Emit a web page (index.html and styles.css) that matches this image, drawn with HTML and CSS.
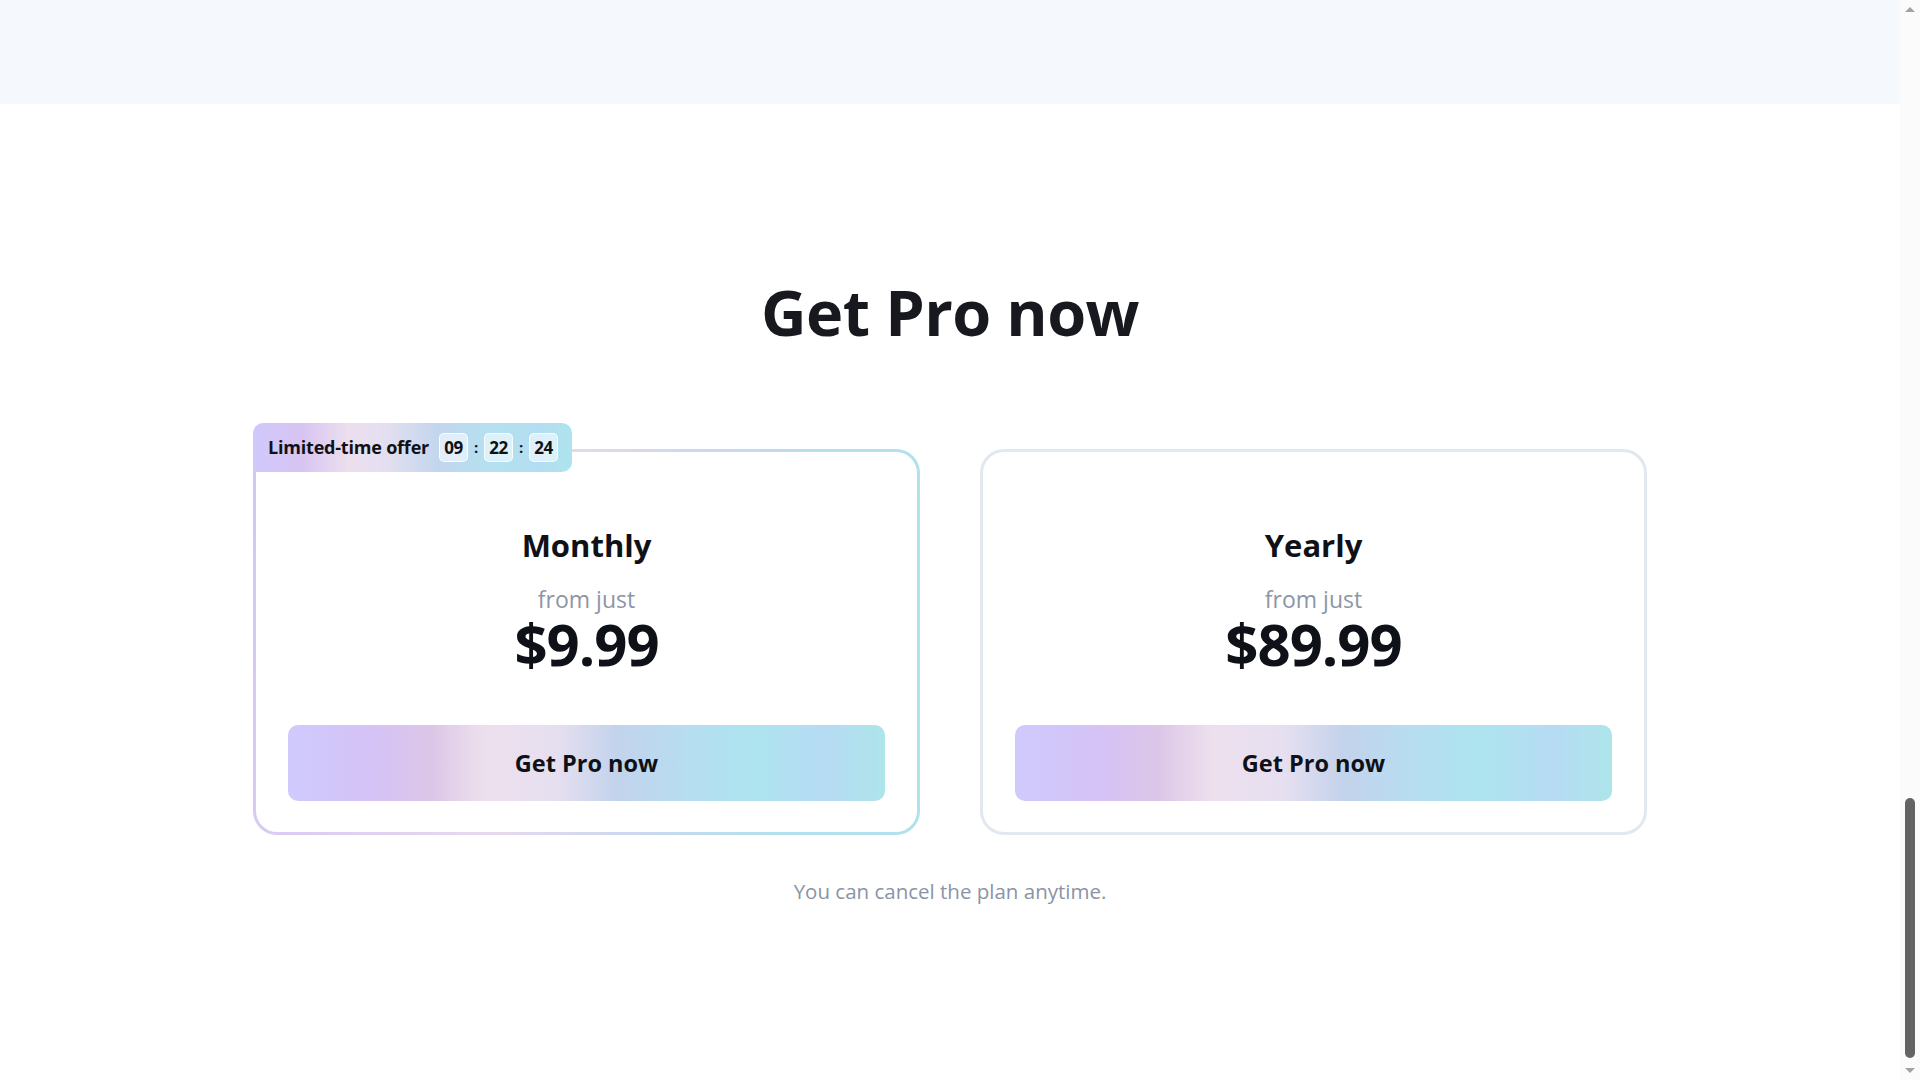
FILE: index.html
```html
<!DOCTYPE html>
<html lang="en">
<head>
<meta charset="utf-8">
<title>Get Pro now</title>
<link rel="stylesheet" href="styles.css">
</head>
<body>
<div class="window">
  <main class="page">
    <section class="hero-tail"></section>
    <section class="pricing">
      <h1 class="pricing-title">Get Pro now</h1>
      <div class="plans">
        <article class="plan plan--featured">
          <div class="offer-badge">
            <span class="offer-label">Limited-time offer</span>
            <span class="timer">
              <span class="timer-box">09</span>
              <span class="timer-sep">:</span>
              <span class="timer-box">22</span>
              <span class="timer-sep">:</span>
              <span class="timer-box">24</span>
            </span>
          </div>
          <h2 class="plan-name">Monthly</h2>
          <p class="plan-from">from just</p>
          <p class="plan-price">$9.99</p>
          <button class="plan-cta" type="button">Get Pro now</button>
        </article>
        <article class="plan">
          <h2 class="plan-name">Yearly</h2>
          <p class="plan-from">from just</p>
          <p class="plan-price">$89.99</p>
          <button class="plan-cta" type="button">Get Pro now</button>
        </article>
      </div>
      <p class="pricing-note">You can cancel the plan anytime.</p>
    </section>
  </main>
  <div class="scrollbar" aria-hidden="true">
    <span class="scroll-arrow scroll-arrow--up"></span>
    <div class="scroll-track"><span class="scroll-thumb"></span></div>
    <span class="scroll-arrow scroll-arrow--down"></span>
  </div>
</div>
</body>
</html>
```
FILE: styles.css
```css
html, body {
  margin: 0;
  height: 100%;
}

body {
  font-family: "Open Sans", "Noto Sans", sans-serif;
  color: #13151b;
  background: #ffffff;
  overflow: hidden;
}

.window {
  display: flex;
  height: 100vh;
  overflow: hidden;
}

.page {
  flex: 1;
  min-width: 0;
}

.hero-tail {
  height: 104px;
  background: #f5f8fc;
}

.pricing {
  box-sizing: border-box;
  padding-top: 170px;
  display: flex;
  flex-direction: column;
  align-items: center;
}

.pricing-title {
  margin: 0;
  font-size: 63px;
  line-height: 1.2;
  font-weight: 700;
  letter-spacing: -0.6px;
  color: #18191f;
}

.plans {
  margin-top: 99px;
  display: grid;
  grid-template-columns: 667px 667px;
  gap: 60px;
}

.plan {
  position: relative;
  box-sizing: border-box;
  border: 3px solid #e1e8ef;
  border-radius: 24px;
  padding: 75px 32px 31px;
  display: flex;
  flex-direction: column;
  align-items: center;
  text-align: center;
  background: #ffffff;
}

.plan--featured {
  border-color: transparent;
  background:
    linear-gradient(#ffffff, #ffffff) padding-box,
    linear-gradient(100deg, #d4c6f5 0%, #e6d9ee 42%, #cad8ee 62%, #b4e0ec 80%, #b0e2ec 100%) border-box;
}

.offer-badge {
  position: absolute;
  top: -29px;
  left: -3px;
  height: 49px;
  box-sizing: border-box;
  padding: 0 14px 0 15px;
  display: flex;
  align-items: center;
  gap: 10px;
  border-radius: 10px 10px 10px 0;
  background: linear-gradient(90deg, #d0c9fb 0%, #d7c4f2 15%, #ecdfee 30%, #e3dff0 42%, #c2d6ee 58%, #b3e1f0 75%, #b3def2 90%, #ade4ec 100%);
  font-size: 18px;
  font-weight: 700;
  color: #0f1117;
}

.offer-label {
  white-space: nowrap;
  letter-spacing: -0.2px;
}

.timer {
  display: flex;
  align-items: center;
  gap: 5px;
}

.timer-box {
  width: 29px;
  height: 29px;
  box-sizing: border-box;
  display: flex;
  align-items: center;
  justify-content: center;
  background: rgba(255, 255, 255, 0.55);
  border: 1px solid rgba(255, 255, 255, 0.85);
  border-radius: 5px;
  font-size: 17px;
  font-weight: 700;
  letter-spacing: -0.3px;
}

.timer-sep {
  font-size: 15px;
  font-weight: 700;
  width: 6px;
  text-align: center;
}

.plan-name {
  margin: 0;
  font-size: 31px;
  line-height: 36px;
  font-weight: 700;
  color: #0f1117;
}

.plan-from {
  margin: 23px 0 0;
  font-size: 23px;
  line-height: 26px;
  font-weight: 400;
  color: #8d96a6;
}

.plan-price {
  margin: 3px 0 0;
  font-size: 58px;
  line-height: 58px;
  font-weight: 700;
  letter-spacing: -1px;
  color: #0e1118;
}

.plan-cta {
  margin-top: 52px;
  width: 100%;
  height: 76px;
  border: 0;
  border-radius: 10px;
  background: linear-gradient(90deg, #cfcafd 0%, #d5c2f6 14%, #dcc6e8 24%, #ede0ed 33%, #e6dff0 45%, #c3d3ec 55%, #b5def1 68%, #ade4ef 78%, #b6dbf3 90%, #ade5ea 100%);
  font-family: inherit;
  font-size: 23.5px;
  font-weight: 700;
  color: #0f1117;
  cursor: pointer;
}

.pricing-note {
  margin: 42px 0 0;
  font-size: 20.5px;
  line-height: 28px;
  color: #8a94a6;
}

.scrollbar {
  flex: none;
  width: 20px;
  background: #fbfbfb;
  display: flex;
  flex-direction: column;
  align-items: center;
}

.scroll-arrow {
  flex: none;
  width: 0;
  height: 0;
  border-left: 5px solid transparent;
  border-right: 5px solid transparent;
}

.scroll-arrow--up {
  margin-top: 7px;
  border-bottom: 5px solid #a3a3a3;
}

.scroll-arrow--down {
  margin-bottom: 7px;
  border-top: 5px solid #a3a3a3;
}

.scroll-track {
  flex: 1;
  display: flex;
  flex-direction: column;
  justify-content: flex-end;
  padding-bottom: 10px;
}

.scroll-thumb {
  width: 10px;
  height: 260px;
  border-radius: 5px;
  background: #636363;
}
```
